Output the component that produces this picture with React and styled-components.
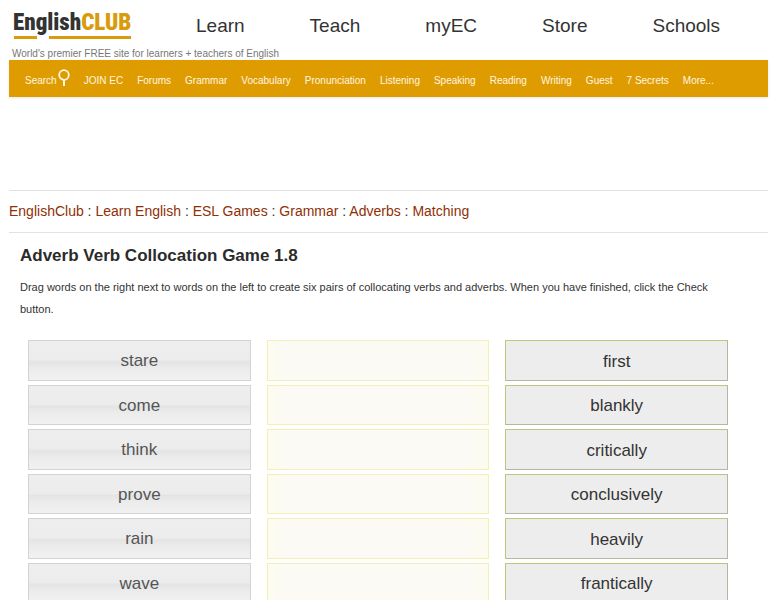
import React from 'react';
import styled, { createGlobalStyle } from 'styled-components';

const GlobalStyle = createGlobalStyle`
  * { box-sizing: border-box; }
  body {
    margin: 0;
    background: #fff;
    color: #333;
    font-family: "Liberation Sans", Arial, Helvetica, sans-serif;
  }
  a { text-decoration: none; }
`;

const Page = styled.div`
  padding: 0 9px;
`;

const Header = styled.header`
  display: flex;
  height: 44px;
`;

const LogoLink = styled.a`
  flex: none;
  width: 187px;
  padding-left: 4px;
`;

const LogoMark = styled.svg`
  display: block;
  font-family: "Roboto Condensed", Lato, "Liberation Sans", sans-serif;
  font-weight: 900;
  font-size: 23px;
`;

const MainNav = styled.nav`
  display: flex;
  gap: 65px;
  padding-top: 14px;
`;

const MainLink = styled.a`
  color: #333;
  font-size: 19px;
  line-height: 24px;
`;

const Tagline = styled.p`
  margin: 0;
  padding: 2px 3px 0;
  height: 16px;
  color: #777;
  font-size: 10px;
  line-height: 15px;
  white-space: nowrap;
`;

const TopicBar = styled.nav`
  display: flex;
  align-items: center;
  gap: 14px;
  height: 37px;
  padding: 4px 16px 0;
  background: #df9c00;
  box-shadow: 0 1px 3px #e6e6ee;
  white-space: nowrap;
`;

const TopicLink = styled.a`
  display: flex;
  align-items: center;
  color: #fff6e0;
  font-size: 10px;
  line-height: 16px;
`;

const SearchIcon = styled.svg`
  display: block;
  margin-bottom: 6px;
`;

const Breadcrumbs = styled.nav`
  margin-top: 93px;
  border-top: 1px solid #e2e2e2;
  border-bottom: 1px solid #e2e2e2;
  padding: 10px 0;
  font-size: 14px;
  line-height: 21px;
`;

const Crumb = styled.a`
  color: #8f2f06;
`;

const Game = styled.main`
  padding: 11px 29px 0 11px;
`;

const Title = styled.h1`
  margin: 0 0 8px;
  color: #2b2b2b;
  font-size: 17px;
  line-height: 24px;
`;

const Instructions = styled.p`
  margin: 0 0 20px;
  font-size: 11px;
  line-height: 22px;
`;

const Board = styled.div`
  display: grid;
  grid-template-columns: repeat(3, 1fr);
  gap: 16px;
  margin: 0 11px 0 8px;
`;

const Column = styled.ul`
  display: grid;
  grid-auto-rows: 1fr;
  gap: 4px;
  min-height: 263px;
  margin: 0;
  padding: 0;
  list-style: none;
`;

const Prompt = styled.li`
  display: flex;
  align-items: center;
  justify-content: center;
  border: 1px solid #d3d3d3;
  background: linear-gradient(#eeeeee 0%, #ececec 49%, #e4e4e4 53%, #ececec 72%, #f1f1f1 100%);
  color: #555;
  padding-top: 2px;
  font-size: 17px;
`;

const Slot = styled.li`
  border: 1px solid #f3efb5;
  background: linear-gradient(90deg, #fdfcf0, #fbfaf4 8%, #fbfaf4 92%, #fdfcf0);
`;

const AnswerItem = styled.li`
  display: grid;
`;

const Answer = styled.button`
  border: 1px solid;
  border-color: #c3c47e #b3b7a5 #b3b7a5 #c3c47e;
  background: #ededed;
  color: #333;
  padding: 3px 0 0;
  font-family: inherit;
  font-size: 17px;
  cursor: move;
`;

const sections = ['Learn', 'Teach', 'myEC', 'Store', 'Schools'];
const topics = [
  'JOIN EC', 'Forums', 'Grammar', 'Vocabulary', 'Pronunciation', 'Listening',
  'Speaking', 'Reading', 'Writing', 'Guest', '7 Secrets', 'More...',
];
const trail = ['EnglishClub', 'Learn English', 'ESL Games', 'Grammar', 'Adverbs', 'Matching'];
const verbs = ['stare', 'come', 'think', 'prove', 'rain', 'wave'];
const adverbs = ['first', 'blankly', 'critically', 'conclusively', 'heavily', 'frantically'];

function Logo() {
  return (
    <LogoMark width="150" height="42" viewBox="0 0 150 42" role="img" aria-label="EnglishCLUB">
      <text x="0" y="30" fill="#333">
        English<tspan fill="#d99a0c">CLUB</tspan>
      </text>
      <path d="M1 37.5H24M36 37.5H118" stroke="#d99a0c" strokeWidth="3" />
    </LogoMark>
  );
}

export default function App() {
  return (
    <>
      <GlobalStyle />
      <Page>
        <Header>
          <LogoLink href="#home"><Logo /></LogoLink>
          <MainNav aria-label="Sections">
            {sections.map((name) => <MainLink key={name} href="#section">{name}</MainLink>)}
          </MainNav>
        </Header>
        <Tagline>World's premier FREE site for learners + teachers of English</Tagline>
        <TopicBar aria-label="Topics">
          <TopicLink href="#search">
            Search
            <SearchIcon width="13" height="18" viewBox="0 0 13 18" fill="none" stroke="#fff6e0" aria-hidden="true">
              <circle cx="7" cy="6" r="4.8" strokeWidth="1.8" />
              <path d="M7 10.5V17" strokeWidth="2" />
            </SearchIcon>
          </TopicLink>
          {topics.map((name) => <TopicLink key={name} href="#topic">{name}</TopicLink>)}
        </TopicBar>
        <Breadcrumbs aria-label="Breadcrumb">
          {trail.map((name, i) => (
            <React.Fragment key={name}>
              {i > 0 && ' : '}
              <Crumb href="#crumb">{name}</Crumb>
            </React.Fragment>
          ))}
        </Breadcrumbs>
        <Game>
          <Title>Adverb Verb Collocation Game 1.8</Title>
          <Instructions>
            Drag words on the right next to words on the left to create six pairs of collocating
            verbs and adverbs. When you have finished, click the Check button.
          </Instructions>
          <Board>
            <Column>{verbs.map((w) => <Prompt key={w}>{w}</Prompt>)}</Column>
            <Column>{verbs.map((w) => <Slot key={w} />)}</Column>
            <Column>
              {adverbs.map((w) => (
                <AnswerItem key={w}><Answer type="button" draggable>{w}</Answer></AnswerItem>
              ))}
            </Column>
          </Board>
        </Game>
      </Page>
    </>
  );
}
